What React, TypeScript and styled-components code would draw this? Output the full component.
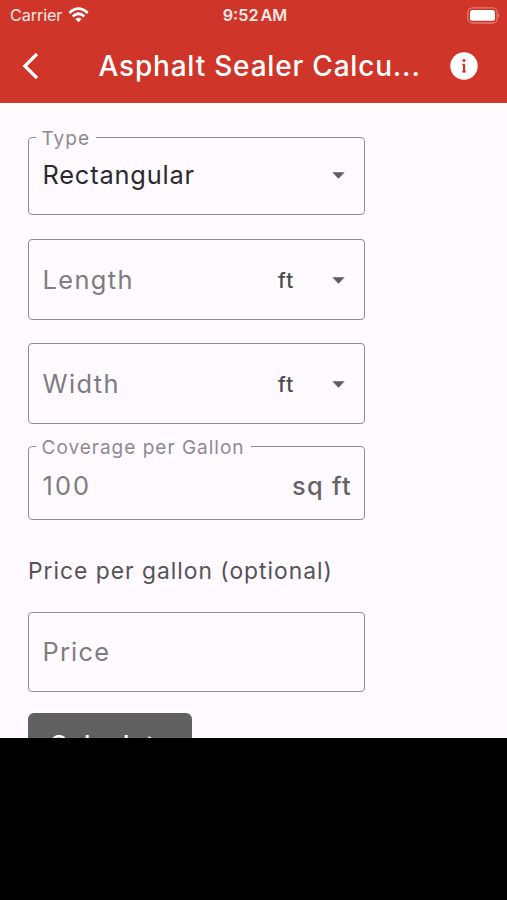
import React from "react";
import styled, { createGlobalStyle } from "styled-components";

const GlobalStyle = createGlobalStyle`
  * { box-sizing: border-box; }
  html, body { margin: 0; background: #000; overflow: hidden; }
  body { font-family: Inter, Roboto, sans-serif; }
`;

const Page = styled.div`
  width: 507px;
  height: 900px;
  background: #000;
`;

const Screen = styled.div`
  display: flex;
  flex-direction: column;
  height: 738px;
  overflow: hidden;
  background: #fefaff;
`;

const Header = styled.header`
  flex: none;
  height: 103px;
  background: #d03529;
  color: #fff;
`;

const StatusBar = styled.div`
  display: grid;
  grid-template-columns: 1fr auto 1fr;
  align-items: center;
  height: 30px;
  padding: 0 7px 0 10px;
  color: #fde9e6;
`;

const Carrier = styled.div`
  display: flex;
  align-items: center;
  gap: 6px;
  font-size: 16.2px;
  letter-spacing: -0.1px;
`;

const Clock = styled.div`
  font-size: 16.2px;
  font-weight: 600;
  word-spacing: -2px;
`;

const Battery = styled.svg`
  justify-self: end;
`;

const AppBar = styled.div`
  display: flex;
  align-items: center;
  height: 72px;
  padding: 0 29px 0 22px;
`;

const Title = styled.h1`
  flex: 1;
  margin: 0 0 0 58.5px;
  font-size: 28px;
  font-weight: 500;
  line-height: 40px;
  letter-spacing: 0.8px;
  white-space: nowrap;
`;

const Form = styled.main`
  display: flex;
  flex-direction: column;
  flex: none;
  width: 337px;
  margin: 34px 0 0 28px;
`;

const Field = styled.div<{ $height: number; $gap?: number; $drop?: number; $lift?: number }>`
  position: relative;
  display: flex;
  align-items: center;
  flex: none;
  height: ${(p) => p.$height}px;
  margin-top: ${(p) => p.$gap ?? 0}px;
  padding: ${(p) => p.$drop ?? 0}px 12px ${(p) => p.$lift ?? 0}px 13.5px;
  border: 1.4px solid #918d92;
  border-radius: 4px;
  line-height: 30px;
`;

const FloatingLabel = styled.span<{ $width: number }>`
  position: absolute;
  top: -11px;
  left: 7px;
  width: ${(p) => p.$width}px;
  padding-left: 5.5px;
  background: #fefaff;
  color: #8d8a8e;
  font-size: 19px;
  line-height: 24px;
  letter-spacing: 1px;
  white-space: nowrap;
`;

const Value = styled.span<{ $spacing?: number; $tone?: string }>`
  flex: 1;
  color: ${(p) => p.$tone ?? "#7e7c7e"};
  font-size: 25.4px;
  letter-spacing: ${(p) => p.$spacing ?? 1.4}px;
`;

const Unit = styled.span`
  width: 54px;
  padding-top: 2px;
  color: #4b494c;
  font-size: 20.5px;
  font-weight: 500;
  letter-spacing: 1.2px;
`;

const Suffix = styled.span`
  color: #666367;
  font-size: 25.4px;
  font-weight: 500;
  letter-spacing: 1.3px;
`;

const Arrow = styled.svg`
  flex: none;
  margin-right: 7px;
`;

const Caption = styled.p`
  margin: 36px 0 0;
  height: 30px;
  color: #555256;
  font-size: 22.8px;
  line-height: 30px;
  letter-spacing: 1px;
  white-space: nowrap;
`;

const Button = styled.button`
  flex: none;
  width: 164px;
  height: 64px;
  margin-top: 21px;
  padding: 0;
  border: 0;
  border-radius: 6px;
  background: #616161;
  color: #fff;
  font: 500 25.4px/64px Inter, sans-serif;
  letter-spacing: 0.9px;
`;

function DropArrow() {
  return (
    <Arrow width="13" height="7" viewBox="0 0 13 7">
      <path d="M0.3 0.2H12.7L6.5 6.8Z" fill="#605d61" />
    </Arrow>
  );
}

export default function App() {
  return (
    <Page>
      <GlobalStyle />
      <Screen>
        <Header>
          <StatusBar>
            <Carrier>
              Carrier
              <svg width="21" height="16" viewBox="0 0 21 16" fill="none" stroke="#fff" strokeWidth="2.7">
                <path d="M1.3 5.9Q10.5-2.5 19.7 5.9" />
                <path d="M4.7 9.4Q10.5 4.1 16.3 9.4" />
                <path d="M10.5 15.2L7.4 12Q10.5 9.5 13.6 12Z" fill="#fff" stroke="none" />
              </svg>
            </Carrier>
            <Clock>9:52 AM</Clock>
            <Battery width="33" height="17" viewBox="0 0 33 17">
              <rect x="0.8" y="0.8" width="29.4" height="15.2" rx="4.6" fill="none" stroke="#e07b71" strokeWidth="1.3" />
              <rect x="3" y="3" width="25" height="10.8" rx="2.6" fill="#fff" />
              <path d="M31.4 6Q33.2 8.4 31.4 10.8Z" fill="#e58e86" />
            </Battery>
          </StatusBar>
          <AppBar>
            <svg width="18" height="28" viewBox="0 0 18 28" fill="none" stroke="#fff" strokeWidth="3.2">
              <path d="M15 2L2.8 14L15 26" />
            </svg>
            <Title>Asphalt Sealer Calcu...</Title>
            <svg width="28" height="28" viewBox="0 0 28 28">
              <circle cx="14" cy="14" r="13.7" fill="#fff" />
              <g fill="#d03529">
                <circle cx="14" cy="8.4" r="1.5" />
                <path d="M12.3 11.8H15.2V19.2H16V20.4H12V19.2H12.9V13.1H12.3Z" />
              </g>
            </svg>
          </AppBar>
        </Header>
        <Form>
          <Field $height={78} $lift={2}>
            <FloatingLabel $width={60}>Type</FloatingLabel>
            <Value $tone="#2b292c" $spacing={0.8}>Rectangular</Value>
            <DropArrow />
          </Field>
          <Field $height={81} $gap={24} $drop={1}>
            <Value>Length</Value>
            <Unit>ft</Unit>
            <DropArrow />
          </Field>
          <Field $height={81} $gap={23} $drop={1}>
            <Value>Width</Value>
            <Unit>ft</Unit>
            <DropArrow />
          </Field>
          <Field $height={74} $gap={22} $drop={5}>
            <FloatingLabel $width={215}>Coverage per Gallon</FloatingLabel>
            <Value $spacing={2.1}>100</Value>
            <Suffix>sq ft</Suffix>
          </Field>
          <Caption>Price per gallon (optional)</Caption>
          <Field $height={80} $gap={26}>
            <Value $spacing={1.2}>Price</Value>
          </Field>
          <Button>Calculate</Button>
        </Form>
      </Screen>
    </Page>
  );
}
